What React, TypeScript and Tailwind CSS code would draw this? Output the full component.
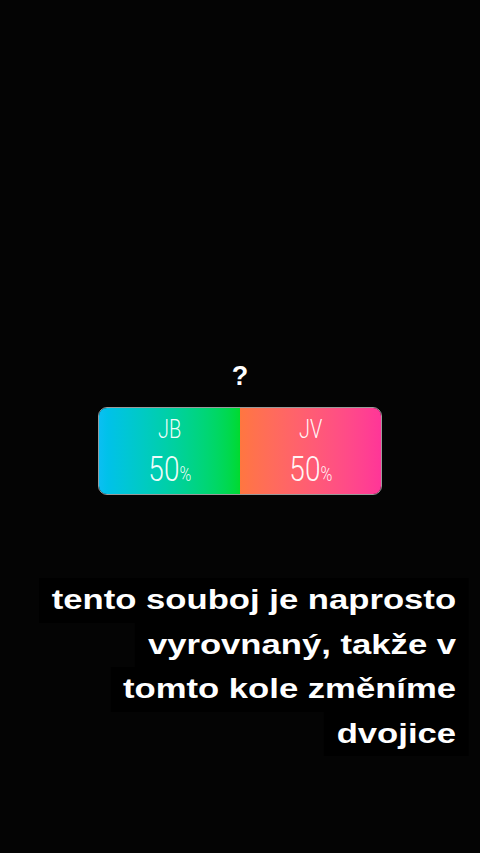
const lines = ['tento souboj je naprosto', 'vyrovnaný, takže v', 'tomto kole změníme', 'dvojice'];

function PollHalf({ label, value, className }: { label: string; value: string; className: string }) {
  return (
    <div className={`flex flex-1 flex-col items-center pt-[8px] text-white/95 ${className}`}>
      <span className="inline-block origin-center scale-x-[0.8] text-[25px] font-light leading-[28px]">{label}</span>
      <span className="mt-[6px] inline-block origin-center scale-x-[0.8] text-[35px] font-light leading-[40px]">
        {value}
        <span className="text-[20px]">%</span>
      </span>
    </div>
  );
}

export default function App() {
  return (
    <div className="flex h-[853px] w-[480px] flex-col items-center overflow-hidden bg-[#040404] font-['Liberation_Sans',Arial,sans-serif]">
      <p className="mt-[360px] text-[27px] font-bold leading-[32px] text-white">?</p>

      <div className="mt-[15px] flex h-[88px] w-[284px] overflow-hidden rounded-[9px] border border-white/60 font-['Roboto',sans-serif]">
        <PollHalf label="JB" value="50" className="bg-gradient-to-r from-[#0bbff2] to-[#00da2e]" />
        <PollHalf label="JV" value="50" className="bg-gradient-to-r from-[#ff7640] to-[#ff3598]" />
      </div>

      <div className="mt-[83px] flex w-full origin-right scale-x-[1.26] flex-col items-end pr-[9px]">
        {lines.map((line) => (
          <span key={line} className="bg-black px-[10px] text-[27.5px] font-bold leading-[44.5px] text-white">
            {line}
          </span>
        ))}
      </div>
    </div>
  );
}
